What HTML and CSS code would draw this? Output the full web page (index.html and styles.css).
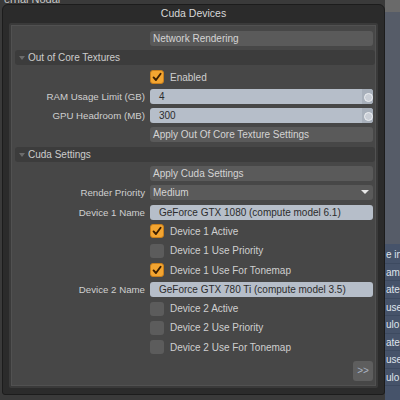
FILE: index.html
```html
<!DOCTYPE html>
<html>

<head>
  <meta charset="utf-8">
  <meta name="viewport" content="width=device-width">
  <title>Cuda Devices</title>
  <link rel="stylesheet" href="styles.css">
</head>

<body>
  <div class="screen">
    <div class="behind">ernal Nodal</div>
    <div class="dialog">
      <div class="title">Cuda Devices</div>
      <div class="panel">
        <div class="row">
          <span></span>
          <span class="btn">Network Rendering</span>
        </div>
        <div class="group"><i class="tri"></i>Out of Core Textures</div>
        <div class="row">
          <span></span>
          <label class="check"><i class="box on"><svg viewBox="0 0 14 14"><path d="M3 7.5 L5.8 10.5 L11.2 3.2" /></svg></i>Enabled</label>
        </div>
        <div class="row">
          <span class="lbl">RAM Usage Limit (GB)</span>
          <span class="field">4<i class="knob"></i></span>
        </div>
        <div class="row">
          <span class="lbl">GPU Headroom (MB)</span>
          <span class="field">300<i class="knob"></i></span>
        </div>
        <div class="row">
          <span></span>
          <span class="btn">Apply Out Of Core Texture Settings</span>
        </div>
        <div class="group"><i class="tri"></i>Cuda Settings</div>
        <div class="row">
          <span></span>
          <span class="btn">Apply Cuda Settings</span>
        </div>
        <div class="row">
          <span class="lbl">Render Priority</span>
          <span class="btn pick">Medium<i class="arrow"></i></span>
        </div>
        <div class="row">
          <span class="lbl">Device 1 Name</span>
          <span class="field">GeForce GTX 1080 (compute model 6.1)</span>
        </div>
        <div class="row">
          <span></span>
          <label class="check"><i class="box on"><svg viewBox="0 0 14 14"><path d="M3 7.5 L5.8 10.5 L11.2 3.2" /></svg></i>Device 1 Active</label>
        </div>
        <div class="row">
          <span></span>
          <label class="check"><i class="box"></i>Device 1 Use Priority</label>
        </div>
        <div class="row">
          <span></span>
          <label class="check"><i class="box on"><svg viewBox="0 0 14 14"><path d="M3 7.5 L5.8 10.5 L11.2 3.2" /></svg></i>Device 1 Use For Tonemap</label>
        </div>
        <div class="row">
          <span class="lbl">Device 2 Name</span>
          <span class="field">GeForce GTX 780 Ti (compute model 3.5)</span>
        </div>
        <div class="row">
          <span></span>
          <label class="check"><i class="box"></i>Device 2 Active</label>
        </div>
        <div class="row">
          <span></span>
          <label class="check"><i class="box"></i>Device 2 Use Priority</label>
        </div>
        <div class="row">
          <span></span>
          <label class="check"><i class="box"></i>Device 2 Use For Tonemap</label>
        </div>
        <div class="more"><span>&gt;&gt;</span></div>
      </div>
    </div>
    <div class="side">
      <div class="side-top"></div>
      <div class="side-mid"></div>
      <div class="side-list">
        <span>e in</span>
        <span>am</span>
        <span>ate</span>
        <span>use</span>
        <span>ulo</span>
        <span>ate</span>
        <span>use</span>
        <span>ulo</span>
      </div>
    </div>
  </div>
</body>

</html>
```

FILE: styles.css
```css
* {
  margin: 0;
  box-sizing: border-box;
}

body {
  width: 400px;
  height: 400px;
  overflow: hidden;
  background-color: #2f2f2f;
  font-family: "Liberation Sans", Arial, sans-serif;
  font-size: 10px;
  color: #d0d0d0;
}

.screen {
  display: flex;
  position: relative;
  height: 400px;
  background-color: #3a3a3a;
}

/* window underneath, only the foot of its title shows */
.behind {
  position: absolute;
  top: -7px;
  left: 4px;
  font-size: 11px;
  color: #c8c8c8;
}

/* 对话框 */
.dialog {
  width: 383px;
  height: 391px;
  margin: 4px 0 0 2px;
  display: flex;
  flex-direction: column;
  background-color: #2b2b2b;
  border: 1px solid #1c1c1c;
  border-radius: 6px 6px 3px 3px;
  padding: 0 6px 6px 6px;
}

.title {
  height: 18px;
  line-height: 16px;
  text-align: center;
  font-size: 10.5px;
  color: #d8d8d8;
}

.panel {
  flex: 1;
  display: flex;
  flex-direction: column;
  gap: 4.3px;
  padding: 6px 1px 0 4px;
  background-color: #474747;
  border: 2px solid #3a3a3a;
  box-shadow: inset 0 0 0 1px #515151;
  border-radius: 2px;
}

.row {
  display: grid;
  grid-template-columns: 130px 223px;
  column-gap: 5px;
  height: 15px;
}

.lbl {
  text-align: right;
  line-height: 15px;
  font-size: 9.7px;
  color: #cfcfcf;
}

.btn {
  position: relative;
  display: block;
  height: 15px;
  line-height: 15px;
  padding-left: 3px;
  background-color: #5a5a5a;
  border-radius: 3px;
  color: #d4d4d4;
  white-space: nowrap;
}

.pick .arrow {
  position: absolute;
  right: 4px;
  top: 5px;
  border-left: 4px solid transparent;
  border-right: 4px solid transparent;
  border-top: 4px solid #e8e8e8;
}

.field {
  position: relative;
  display: block;
  height: 15px;
  line-height: 15px;
  padding-left: 9px;
  background-color: #b6bec9;
  border-radius: 3px;
  color: #2c2c2c;
  white-space: nowrap;
}

.knob {
  position: absolute;
  right: 0;
  top: 0;
  width: 11px;
  height: 15px;
  background-color: #a8b0bb;
  border-radius: 0 3px 3px 0;
}

.knob::after {
  content: "";
  position: absolute;
  left: 2px;
  top: 4px;
  width: 7px;
  height: 7px;
  border-radius: 50%;
  background-color: #c9ced6;
  border: 1.5px solid #eef0f3;
}

/* 分组标题 */
.group {
  height: 15px;
  line-height: 15px;
  padding-left: 13px;
  position: relative;
  background-color: #3c3c3c;
  border-radius: 3px;
  color: #cccccc;
}

.tri {
  position: absolute;
  left: 4px;
  top: 6px;
  border-left: 3px solid transparent;
  border-right: 3px solid transparent;
  border-top: 4px solid #6c6c6c;
}

/* 复选框 */
.check {
  display: flex;
  align-items: center;
  gap: 6px;
  line-height: 15px;
  color: #cfcfcf;
}

.box {
  display: block;
  width: 14px;
  height: 14px;
  border-radius: 3px;
  background-color: #5c5c5c;
}

.box.on {
  background-color: #f3a531;
  border: 1px solid #c97f1c;
}

.box svg {
  display: block;
  width: 12px;
  height: 12px;
}

.box path {
  fill: none;
  stroke: #3a1e02;
  stroke-width: 2.2;
  stroke-linecap: round;
  stroke-linejoin: round;
}

.more {
  display: flex;
  justify-content: flex-end;
  padding: 1.7px 2px 0 0;
}

.more span {
  width: 20px;
  height: 20px;
  line-height: 20px;
  text-align: center;
  background-color: #5e5e5e;
  border-radius: 3px;
  color: #a9b3c2;
  font-size: 10px;
}

/* 右边被挡住的窗口 */
.side {
  flex: 1;
  display: flex;
  flex-direction: column;
  overflow: hidden;
}

.side-top {
  height: 12px;
  background-color: #6a6a6a;
}

.side-mid {
  height: 232px;
  background-color: #565c68;
}

.side-list {
  flex: 1;
  display: flex;
  flex-direction: column;
  background-color: #46536a;
  padding-top: 2px;
}

.side-list span {
  height: 17.5px;
  line-height: 17px;
  padding-left: 1px;
  border-bottom: 1px solid #3d4a60;
  color: #dfe4ec;
  font-size: 10px;
  white-space: nowrap;
}
```
